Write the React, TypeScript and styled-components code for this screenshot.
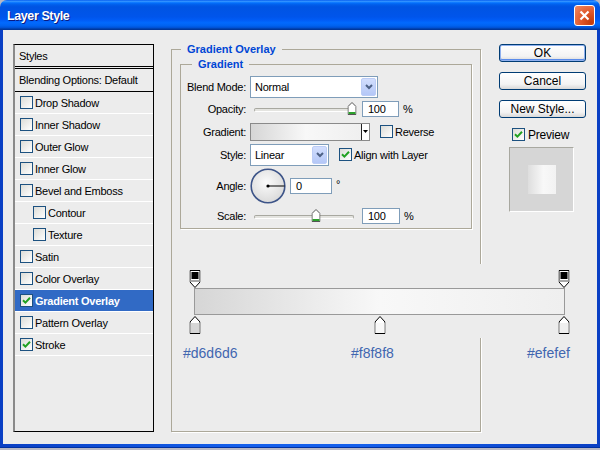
import React from "react";
import styled, { createGlobalStyle } from "styled-components";

const GlobalStyle = createGlobalStyle`
  html, body {
    margin: 0;
    padding: 0;
    background: #b8b8c4;
  }
  body {
    font-family: "Liberation Sans", Arial, sans-serif;
  }
  * {
    box-sizing: border-box;
  }
`;

const Window = styled.div`
  width: 600px;
  height: 448px;
  display: flex;
  flex-direction: column;
  border-radius: 7px 7px 0 0;
  overflow: hidden;
`;

const TitleBar = styled.div`
  height: 30px;
  flex-shrink: 0;
  display: flex;
  align-items: center;
  justify-content: space-between;
  padding: 0 5px 0 7px;
  background: linear-gradient(
    to bottom,
    #0058ee 0%,
    #3593ff 4%,
    #288eff 6%,
    #127dff 8%,
    #036ffc 10%,
    #0262ee 14%,
    #0057e5 20%,
    #0054e3 24%,
    #0055eb 56%,
    #005bf5 66%,
    #026afe 76%,
    #0062ef 86%,
    #0052d6 92%,
    #0040ab 96%,
    #003092 100%
  );
`;

const Title = styled.span`
  color: #fff;
  font-size: 12.5px;
  font-weight: bold;
  letter-spacing: -0.4px;
  text-shadow: 1px 1px 0 #0a1a80;
  padding-top: 1px;
`;

const CloseButton = styled.div`
  width: 21px;
  height: 21px;
  border: 1px solid #fff;
  border-radius: 3px;
  background: radial-gradient(circle at 85% 85%, #c23b0a 0%, #e0582a 45%, #ef8a66 100%);
  display: flex;
  align-items: center;
  justify-content: center;
`;

const Frame = styled.div`
  flex: 1;
  display: flex;
  padding: 0 3px 3px 3px;
  background: linear-gradient(to right, #0a3fc4, #1560ec 40%, #1560ec 60%, #0a3fc4);
  border-bottom: 1px solid #0030a0;
`;

const Body = styled.div`
  flex: 1;
  display: flex;
  align-items: stretch;
  background: #ececec;
  padding: 14px 0 12px 10px;
  font-size: 11px;
  letter-spacing: -0.25px;
  color: #000;
`;

/* ---------- styles list ---------- */

const StylesList = styled.div`
  width: 141px;
  flex-shrink: 0;
  display: flex;
  flex-direction: column;
  border: 1px solid #000;
  border-left: 2px solid #8a8a8a;
  background: #ececec;
`;

const ListHeader = styled.div`
  height: 24px;
  border-bottom: 3px double #000;
  padding-left: 4px;
  display: flex;
  align-items: center;
`;

const BlendRow = styled.div`
  height: 23px;
  border-bottom: 1px solid #000;
  padding-left: 4px;
  display: flex;
  align-items: center;
`;

const StyleRow = styled.div<{ $indent?: boolean; $selected?: boolean }>`
  height: 22px;
  border-bottom: 1px solid #fff;
  display: flex;
  align-items: center;
  gap: 2px;
  padding-left: ${(p) => (p.$indent ? 18 : 5)}px;
  background: ${(p) => (p.$selected ? "#316ac5" : "transparent")};
  color: ${(p) => (p.$selected ? "#fff" : "#000")};
  font-weight: ${(p) => (p.$selected ? "bold" : "normal")};
`;

const Box = styled.div`
  width: 13px;
  height: 13px;
  flex-shrink: 0;
  border: 1px solid #1c5180;
  background: linear-gradient(135deg, #dcdcd7, #ffffff);
  display: flex;
  align-items: center;
  justify-content: center;
`;

function CheckBox({ checked }: { checked?: boolean }) {
  return (
    <Box>
      {checked && (
        <svg width="9" height="9" viewBox="0 0 9 9">
          <path d="M1 4.2 L3.4 6.6 L8 1.8" fill="none" stroke="#21a121" strokeWidth="2" />
        </svg>
      )}
    </Box>
  );
}

/* ---------- middle ---------- */

const Group = styled.fieldset`
  margin: -1px 0 0 17px;
  width: 310px;
  min-width: 0;
  flex-shrink: 0;
  padding: 2px 8px 0 8px;
  border: 1px solid #aca899;
  box-shadow: 1px 1px 0 #fff;
`;

const InnerGroup = styled.fieldset`
  margin: 0;
  min-width: 0;
  padding: 5px 0 2px 0;
  border: 1px solid #aca899;
  box-shadow: 1px 1px 0 #fff;
`;

const Legend = styled.legend<{ $inset: number }>`
  color: #0046d5;
  font-weight: bold;
  font-size: 11px;
  line-height: 13px;
  letter-spacing: 0;
  padding: 0 6px;
  margin-left: ${(p) => p.$inset}px;
`;

const Form = styled.div`
  display: grid;
  grid-template-columns: 65px 1fr;
  grid-template-rows: 22px 22px 23px 23px 39px 21px;
  column-gap: 4px;
  align-items: center;
`;

const Label = styled.div`
  text-align: right;
`;

const Field = styled.div<{ $gap?: number }>`
  display: flex;
  align-items: center;
  gap: ${(p) => p.$gap ?? 4}px;
`;

const SelectBox = styled.div<{ $w: number }>`
  width: ${(p) => p.$w}px;
  height: 22px;
  border: 1px solid #7f9db9;
  background: #fff;
  display: flex;
  align-items: center;
  justify-content: space-between;
  padding: 1px;
  padding-left: 4px;
`;

const DropButton = styled.div`
  width: 15px;
  height: 18px;
  border: 1px solid #bccdf6;
  border-radius: 2px;
  background: linear-gradient(#d2defd, #b4c7f7);
  display: flex;
  align-items: center;
  justify-content: center;
`;

function Select({ value, width }: { value: string; width: number }) {
  return (
    <SelectBox $w={width}>
      <span>{value}</span>
      <DropButton>
        <svg width="8" height="6" viewBox="0 0 8 6">
          <path d="M1 1 L4 4 L7 1" fill="none" stroke="#4d6185" strokeWidth="2" />
        </svg>
      </DropButton>
    </SelectBox>
  );
}

const SliderWrap = styled.div`
  position: relative;
  width: 108px;
  height: 16px;
`;

const Track = styled.div`
  position: absolute;
  left: 4px;
  right: 4px;
  top: 7px;
  height: 4px;
  border-radius: 2px;
  border: 1px solid #a8a8a0;
  border-bottom-color: #fff;
  background: #e4e4e0;
`;

const Thumb = styled.svg`
  position: absolute;
  top: 1px;
  transform: translateX(-50%);
`;

function Slider({ value }: { value: number }) {
  return (
    <SliderWrap>
      <Track />
      <Thumb width="9" height="13" viewBox="0 0 9 13" style={{ left: `calc(4px + (100% - 8px) * ${value / 100})` }}>
        <path d="M0.5 4.5 L4.5 0.5 L8.5 4.5 V12.5 H0.5 Z" fill="#fff" stroke="#555" />
        <rect x="1" y="10" width="7" height="2" fill="#2ca02c" />
      </Thumb>
    </SliderWrap>
  );
}

const NumInput = styled.div<{ $w: number }>`
  width: ${(p) => p.$w}px;
  height: 16px;
  border: 1px solid #7f9db9;
  background: #fff;
  padding-left: 5px;
  line-height: 14px;
`;

const Unit = styled.span<{ $raise?: boolean }>`
  align-self: ${(p) => (p.$raise ? "flex-start" : "center")};
  margin-top: ${(p) => (p.$raise ? "10px" : "0")};
`;

const Swatch = styled.div`
  width: 120px;
  height: 18px;
  border: 1px solid #8a8a8a;
  display: flex;
  margin-right: 8px;
`;

const SwatchFill = styled.div`
  flex: 1;
  background: linear-gradient(90deg, #d6d6d6, #f8f8f8 50%, #efefef);
`;

const SwatchArrow = styled.div`
  width: 8px;
  border-left: 1px solid #222;
  background: #fff;
  display: flex;
  align-items: center;
  justify-content: center;
`;

const DialWrap = styled.svg`
  flex-shrink: 0;
`;

/* ---------- gradient editor ---------- */

const Editor = styled.div`
  position: relative;
  margin-top: 35px;
  width: 410px;
  padding: 6px 0 4px 14px;
  background: #ececec;
`;

const EditorColumn = styled.div`
  width: 371px;
  display: flex;
  flex-direction: column;
`;

const StopTrack = styled.div<{ $gapTop?: number }>`
  position: relative;
  height: 18px;
  margin: ${(p) => p.$gapTop ?? 0}px 1px 0 1px;
`;

const Stop = styled.svg`
  position: absolute;
  top: 0;
  transform: translateX(-50%);
`;

const Bar = styled.div`
  height: 27px;
  border: 1px solid #999;
  background: linear-gradient(90deg, #d6d6d6 0%, #f8f8f8 50%, #efefef 100%);
`;

const HexRow = styled.div`
  margin-top: 7px;
  padding-left: 3px;
  display: grid;
  grid-template-columns: 168px 176px auto;
  font-size: 14px;
  letter-spacing: 0;
  line-height: 16px;
  color: #4166b0;
  width: 420px;
`;

function OpacityStop({ left }: { left: string }) {
  return (
    <Stop width="11" height="18" viewBox="0 0 11 18" style={{ left }}>
      <path d="M0.5 0.5 H10.5 V12 L5.5 17.5 L0.5 12 Z" fill="#fff" stroke="#000" />
      <rect x="2" y="2" width="7" height="7" fill="#000" />
      <rect x="1" y="10" width="9" height="2" fill="#a8a8a8" />
    </Stop>
  );
}

function ColorStop({ left, color }: { left: string; color: string }) {
  return (
    <Stop width="11" height="18" viewBox="0 0 11 18" style={{ left }}>
      <path d="M5.5 0.5 L10.5 6 V17.5 H0.5 V6 Z" fill="#fff" stroke="#000" />
      <rect x="1" y="7" width="9" height="10" fill={color} />
    </Stop>
  );
}

/* ---------- right side ---------- */

const Side = styled.div`
  width: 87px;
  margin-left: 18px;
  flex-shrink: 0;
  display: flex;
  flex-direction: column;
`;

const Button = styled.div<{ $default?: boolean }>`
  height: 18px;
  margin-bottom: 10px;
  border: 1px solid #003c74;
  border-radius: 3px;
  background: linear-gradient(#ffffff, #f3f3f3 70%, #d8d8d8);
  box-shadow: ${(p) => (p.$default ? "inset 0 0 0 1px #8fb0ee, inset 0 -1px 0 1px #5b8cea" : "none")};
  font-size: 12px;
  letter-spacing: 0;
  line-height: 16px;
  text-align: center;
`;

const PreviewToggle = styled.div`
  display: flex;
  align-items: center;
  gap: 3px;
  padding-left: 13px;
  height: 13px;
  font-size: 12px;
  letter-spacing: -0.2px;
`;

const PreviewBox = styled.div`
  width: 65px;
  height: 65px;
  margin: 6px 0 0 10px;
  border: 1px solid;
  border-color: #a8a8a0 #fff #fff #a8a8a0;
  background: #d6d6d6;
  display: flex;
  align-items: center;
  justify-content: center;
`;

const PreviewSquare = styled.div`
  width: 28px;
  height: 29px;
  background: linear-gradient(90deg, #dedede, #f8f8f8 55%, #f2f2f2);
`;

const styleItems: { name: string; checked?: boolean; indent?: boolean; selected?: boolean }[] = [
  { name: "Drop Shadow" },
  { name: "Inner Shadow" },
  { name: "Outer Glow" },
  { name: "Inner Glow" },
  { name: "Bevel and Emboss" },
  { name: "Contour", indent: true },
  { name: "Texture", indent: true },
  { name: "Satin" },
  { name: "Color Overlay" },
  { name: "Gradient Overlay", checked: true, selected: true },
  { name: "Pattern Overlay" },
  { name: "Stroke", checked: true },
];

export default function App() {
  return (
    <>
      <GlobalStyle />
      <Window>
        <TitleBar>
          <Title>Layer Style</Title>
          <CloseButton>
            <svg width="11" height="11" viewBox="0 0 11 11">
              <path d="M1.5 1.5 L9.5 9.5 M9.5 1.5 L1.5 9.5" stroke="#fff" strokeWidth="2.2" />
            </svg>
          </CloseButton>
        </TitleBar>
        <Frame>
          <Body>
            <StylesList>
              <ListHeader>Styles</ListHeader>
              <BlendRow>Blending Options: Default</BlendRow>
              {styleItems.map((item) => (
                <StyleRow key={item.name} $indent={item.indent} $selected={item.selected}>
                  <CheckBox checked={item.checked} />
                  <span>{item.name}</span>
                </StyleRow>
              ))}
            </StylesList>

            <Group>
              <Legend $inset={1}>Gradient Overlay</Legend>
              <InnerGroup>
                <Legend $inset={11}>Gradient</Legend>
                <Form>
                  <Label>Blend Mode:</Label>
                  <Field>
                    <Select value="Normal" width={128} />
                  </Field>

                  <Label>Opacity:</Label>
                  <Field>
                    <Slider value={98} />
                    <NumInput $w={37}>100</NumInput>
                    <Unit>%</Unit>
                  </Field>

                  <Label>Gradient:</Label>
                  <Field $gap={2}>
                    <Swatch>
                      <SwatchFill />
                      <SwatchArrow>
                        <svg width="5" height="3" viewBox="0 0 5 3">
                          <path d="M0 0 H5 L2.5 3 Z" fill="#000" />
                        </svg>
                      </SwatchArrow>
                    </Swatch>
                    <CheckBox />
                    <span>Reverse</span>
                  </Field>

                  <Label>Style:</Label>
                  <Field $gap={2}>
                    <Select value="Linear" width={79} />
                    <span style={{ width: 6 }} />
                    <CheckBox checked />
                    <span>Align with Layer</span>
                  </Field>

                  <Label>Angle:</Label>
                  <Field $gap={4}>
                    <DialWrap width="36" height="36" viewBox="0 0 36 36">
                      <defs>
                        <radialGradient id="dialFill" cx="45%" cy="40%" r="60%">
                          <stop offset="0%" stopColor="#fbfbfb" />
                          <stop offset="100%" stopColor="#dadada" />
                        </radialGradient>
                      </defs>
                      <circle cx="18" cy="18" r="16.8" fill="url(#dialFill)" stroke="#3d5488" strokeWidth="1.6" />
                      <line x1="18" y1="18" x2="34.5" y2="18" stroke="#000" strokeWidth="1" />
                      <circle cx="18" cy="18" r="1.6" fill="#000" />
                    </DialWrap>
                    <NumInput $w={42}>0</NumInput>
                    <Unit $raise>°</Unit>
                  </Field>

                  <Label>Scale:</Label>
                  <Field>
                    <Slider value={61.5} />
                    <NumInput $w={38}>100</NumInput>
                    <Unit>%</Unit>
                  </Field>
                </Form>
              </InnerGroup>

              <Editor>
                <EditorColumn>
                  <StopTrack>
                    <OpacityStop left="0%" />
                    <OpacityStop left="100%" />
                  </StopTrack>
                  <Bar />
                  <StopTrack $gapTop={1}>
                    <ColorStop left="0%" color="#d6d6d6" />
                    <ColorStop left="50%" color="#f8f8f8" />
                    <ColorStop left="100%" color="#efefef" />
                  </StopTrack>
                </EditorColumn>
              </Editor>
              <HexRow>
                <span>#d6d6d6</span>
                <span>#f8f8f8</span>
                <span>#efefef</span>
              </HexRow>
            </Group>

            <Side>
              <Button $default>OK</Button>
              <Button>Cancel</Button>
              <Button>New Style...</Button>
              <PreviewToggle>
                <CheckBox checked />
                <span>Preview</span>
              </PreviewToggle>
              <PreviewBox>
                <PreviewSquare />
              </PreviewBox>
            </Side>
          </Body>
        </Frame>
      </Window>
    </>
  );
}
